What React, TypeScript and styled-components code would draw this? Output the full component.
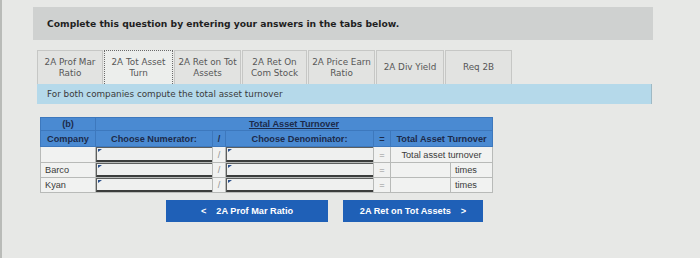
import React from "react";
import styled, { createGlobalStyle } from "styled-components";

const Global = createGlobalStyle`
  html, body { margin: 0; padding: 0; background: #e7e8e6; }
  body { width: 700px; height: 258px; overflow: hidden; }
`;

const Page = styled.div`
  width: 700px;
  height: 258px;
  box-sizing: border-box;
  padding: 7px 0 0 31px;
  border-left: 2px solid #b9bbb8;
  display: flex;
  flex-direction: column;
  font-family: "DejaVu Sans", sans-serif;
`;

const HeaderBox = styled.div`
  width: 620px;
  height: 33px;
  box-sizing: border-box;
  background: #cfd1d0;
  padding-left: 14px;
  display: flex;
  align-items: center;
  font-weight: bold;
  font-size: 9.2px;
  color: #1f1f1f;
`;

const TabRow = styled.div`
  display: flex;
  gap: 1px;
  margin: 10px 0 0 4px;
  align-items: flex-end;
`;

const Tab = styled.div<{ $w: number; $active?: boolean }>`
  width: ${(p) => p.$w}px;
  height: 34px;
  box-sizing: border-box;
  border: 1px ${(p) => (p.$active ? "dotted #6a6a6a" : "solid #c6c7c5")};
  border-bottom: none;
  background: ${(p) => (p.$active ? "#eceeec" : "#e2e3e1")};
  display: flex;
  align-items: center;
  justify-content: center;
  text-align: center;
  font-size: 8.8px;
  line-height: 11px;
  color: #575757;
`;

const InfoBar = styled.div`
  width: 615px;
  height: 20px;
  margin-left: 4px;
  box-sizing: border-box;
  background: #b5d9ea;
  border-right: 1px solid #9fb9c4;
  padding-left: 10px;
  display: flex;
  align-items: center;
  font-size: 8.8px;
  color: #3a3a3a;
`;

const Table = styled.table`
  margin: 13px 0 0 7px;
  border-collapse: collapse;
  table-layout: fixed;
  width: 452px;
  font-family: "Liberation Sans", Arial, sans-serif;
  font-size: 9.2px;
`;

const HeadRow = styled.tr<{ $h: number }>`
  height: ${(p) => p.$h}px;
`;

const BodyRow = styled.tr<{ $h: number }>`
  height: ${(p) => p.$h}px;
`;

const Th = styled.th`
  background: #4a8ad2;
  color: #1c2b4b;
  font-weight: bold;
  padding: 0 4px;
  border: 1px solid #3d78bd;
  text-align: center;
  white-space: nowrap;
`;

const Under = styled.span`
  text-decoration: underline;
`;

const Td = styled.td<{ $align?: string; $muted?: boolean }>`
  padding: 0 4px;
  border: 1px solid #b8bab8;
  background: #f1f2f1;
  color: ${(p) => (p.$muted ? "#8f9190" : "#3a3a3a")};
  text-align: ${(p) => p.$align || "left"};
  white-space: nowrap;
`;

const InputTd = styled.td`
  padding: 0;
  border: 1px solid #b8bab8;
  background: #f1f2f1;
  position: relative;
`;

const SelectBox = styled.div`
  position: absolute;
  inset: 0;
  border-top: 1px solid #5d5f5e;
  border-left: 1px solid #5d5f5e;
  border-bottom: 2px solid #3b3d3c;
  background: #eff0ef;
  &::before {
    content: "";
    position: absolute;
    left: 1px;
    top: 1px;
    border-left: 4px solid #2a4f8a;
    border-bottom: 3px solid transparent;
  }
`;

const ButtonRow = styled.div`
  display: flex;
  gap: 15px;
  margin: 7px 0 0 133px;
`;

const NavButton = styled.button<{ $w: number }>`
  width: ${(p) => p.$w}px;
  height: 22px;
  border: none;
  background: #1f60b7;
  color: #ffffff;
  font-family: "Liberation Sans", Arial, sans-serif;
  font-weight: bold;
  font-size: 9.2px;
  display: flex;
  align-items: center;
  justify-content: center;
  gap: 10px;
  padding: 0;
`;

const tabs: { label: React.ReactNode; w: number; active?: boolean }[] = [
  { label: <>2A Prof Mar<br />Ratio</>, w: 66 },
  { label: <>2A Tot Asset<br />Turn</>, w: 69, active: true },
  { label: <>2A Ret on Tot<br />Assets</>, w: 67 },
  { label: <>2A Ret On<br />Com Stock</>, w: 65 },
  { label: <>2A Price Earn<br />Ratio</>, w: 67 },
  { label: <>2A Div Yield</>, w: 68 },
  { label: <>Req 2B</>, w: 67 },
];

const Select = () => (
  <InputTd>
    <SelectBox />
  </InputTd>
);

export default function App() {
  return (
    <>
      <Global />
      <Page>
        <HeaderBox>Complete this question by entering your answers in the tabs below.</HeaderBox>
        <TabRow>
          {tabs.map((t, i) => (
            <Tab key={i} $w={t.w} $active={t.active}>
              <span>{t.label}</span>
            </Tab>
          ))}
        </TabRow>
        <InfoBar>For both companies compute the total asset turnover</InfoBar>
        <Table>
          <colgroup>
            <col style={{ width: 55 }} />
            <col style={{ width: 117 }} />
            <col style={{ width: 13 }} />
            <col style={{ width: 148 }} />
            <col style={{ width: 17 }} />
            <col style={{ width: 60 }} />
            <col style={{ width: 42 }} />
          </colgroup>
          <thead>
            <HeadRow $h={13}>
              <Th>(b)</Th>
              <Th colSpan={6}>
                <Under>Total Asset Turnover</Under>
              </Th>
            </HeadRow>
            <HeadRow $h={16}>
              <Th>Company</Th>
              <Th>Choose Numerator:</Th>
              <Th>/</Th>
              <Th>Choose Denominator:</Th>
              <Th>=</Th>
              <Th colSpan={2}>Total Asset Turnover</Th>
            </HeadRow>
          </thead>
          <tbody>
            <BodyRow $h={16}>
              <Td />
              <Select />
              <Td $align="center" $muted>/</Td>
              <Select />
              <Td $align="center" $muted>=</Td>
              <Td colSpan={2} $align="center">Total asset turnover</Td>
            </BodyRow>
            {["Barco", "Kyan"].map((c) => (
              <BodyRow key={c} $h={15}>
                <Td>{c}</Td>
                <Select />
                <Td $align="center" $muted>/</Td>
                <Select />
                <Td $align="center" $muted>=</Td>
                <Td />
                <Td>times</Td>
              </BodyRow>
            ))}
          </tbody>
        </Table>
        <ButtonRow>
          <NavButton $w={162}>
            <span>&lt;</span>
            <span>2A Prof Mar Ratio</span>
          </NavButton>
          <NavButton $w={140}>
            <span>2A Ret on Tot Assets</span>
            <span>&gt;</span>
          </NavButton>
        </ButtonRow>
      </Page>
    </>
  );
}
